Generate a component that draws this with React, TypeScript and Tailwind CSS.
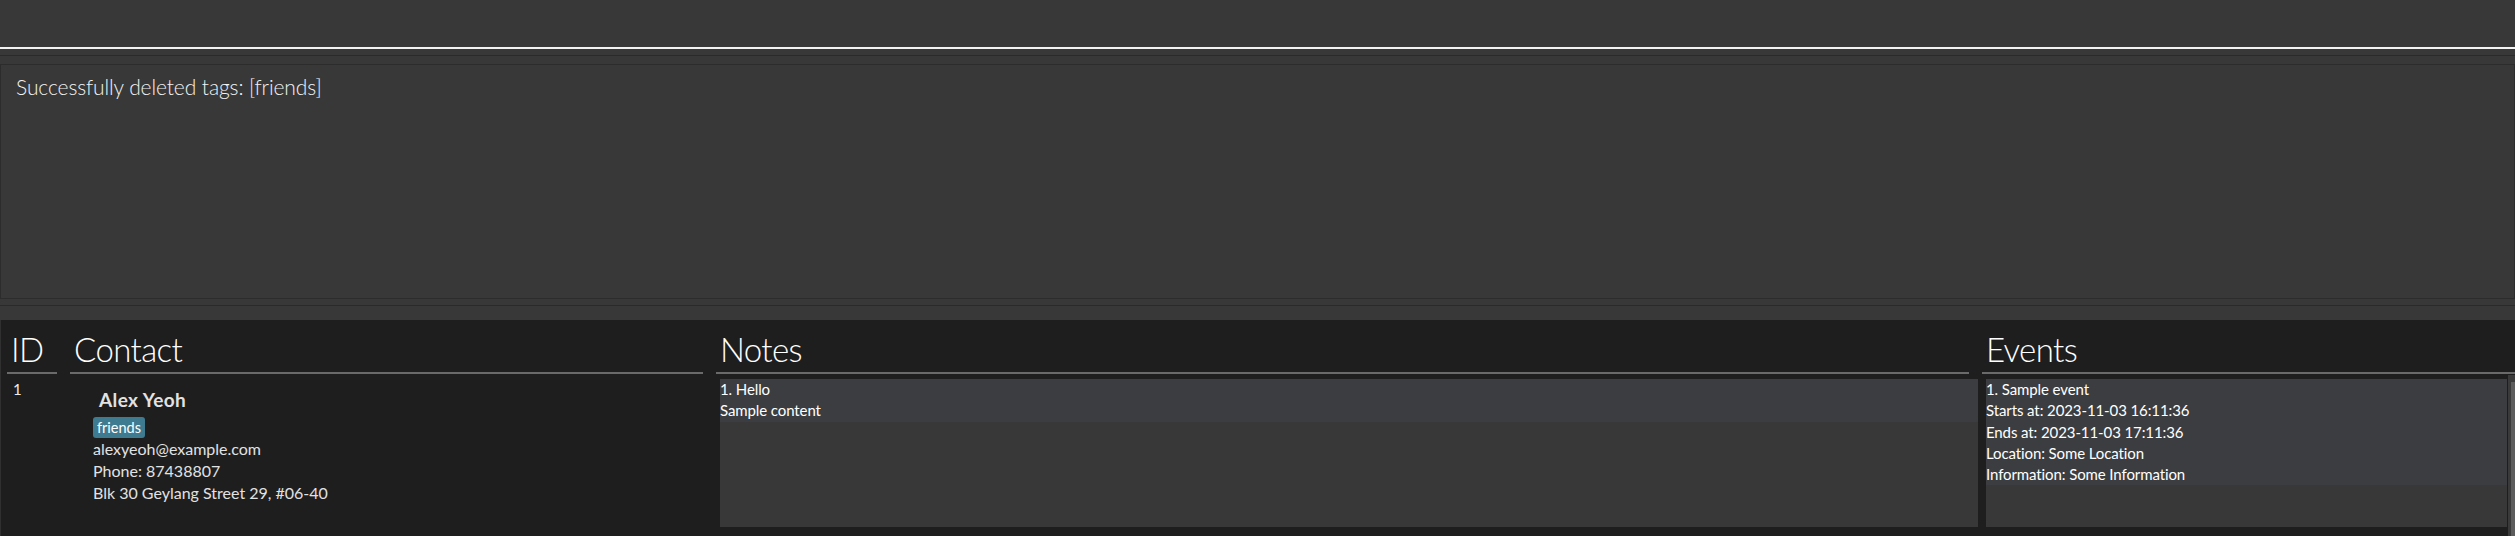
import React from "react";

const font = { fontFamily: "Lato, 'Open Sans', sans-serif" };

interface ColumnHeaderProps {
  title: string;
  lineClass: string;
}

const ColumnHeader: React.FC<ColumnHeaderProps> = ({ title, lineClass }) => (
  <div className="flex flex-col">
    <div className="pt-[12px] pl-[4px] text-[33px] leading-[34px] tracking-[-0.6px] font-light text-white">
      {title}
    </div>
    <div className={`mt-[6px] h-[2px] bg-[#6a6a6a] ${lineClass}`} />
  </div>
);

const events = [
  "1. Sample event",
  "Starts at: 2023-11-03 16:11:36",
  "Ends at: 2023-11-03 17:11:36",
  "Location: Some Location",
  "Information: Some Information",
];

export default function App() {
  return (
    <div
      className="w-[2515px] h-[536px] bg-[#383838] flex flex-col overflow-hidden"
      style={font}>
      {/* command box */}
      <div className="h-[49px] shrink-0 bg-[#383838] border-b-2 border-[#f2f2f2]" />
      <div className="h-[6px] shrink-0" />
      <div className="h-px shrink-0 bg-[#2a2a2a]" />
      <div className="h-[8px] shrink-0" />

      {/* result display */}
      <div className="h-[235px] shrink-0 border border-[#2c2c2c] pl-[15px] pt-[11px]">
        <p className="text-[21px] leading-[22px] tracking-[-0.1px] font-light text-[#f2f2f2]">
          Successfully deleted tags: [friends]
        </p>
      </div>

      <div className="h-[6px] shrink-0" />
      <div className="h-px shrink-0 bg-[#2a2a2a]" />
      <div className="h-[14px] shrink-0" />

      {/* list panel */}
      <div className="h-[216px] shrink-0 bg-[#1e1e1e] border-l border-[#303030] pl-[6px] flex">
        {/* ID */}
        <div className="w-[50px] flex flex-col">
          <ColumnHeader title="ID" lineClass="w-[50px]" />
          <div className="mt-[5px] pl-[6px] text-[15px] leading-[20px] text-[#ececec]">
            1
          </div>
        </div>

        {/* Contact */}
        <div className="ml-[13px] w-[633px] flex flex-col">
          <ColumnHeader title="Contact" lineClass="w-[633px]" />
          <div className="mt-[5px] pl-[23px] flex flex-col items-start text-[#e2e2e2]">
            <div className="mt-[9px] pl-[6px] text-[19px] leading-[24px] tracking-[0.4px] font-bold">
              Alex Yeoh
            </div>
            <span className="mt-[5px] h-[21px] px-[4px] rounded-[3px] bg-[#3e7b91] text-white text-[14.5px] leading-[21px]">
              friends
            </span>
            <div className="text-[16px] leading-[22px]">alexyeoh@example.com</div>
            <div className="text-[16px] leading-[22px]">Phone: 87438807</div>
            <div className="text-[16px] leading-[22px]">
              Blk 30 Geylang Street 29, #06-40
            </div>
          </div>
        </div>

        {/* Notes */}
        <div className="ml-[13px] w-[1262px] flex flex-col">
          <ColumnHeader title="Notes" lineClass="w-[1253px]" />
          <div className="mt-[5px] ml-[4px] h-[148px] bg-[#383838] text-white text-[15px] leading-[21.3px] tracking-[-0.1px]">
            <div className="bg-[#3c3d40]">
              <div>1. Hello</div>
              <div>Sample content</div>
            </div>
          </div>
        </div>

        {/* Events */}
        <div className="ml-[4px] w-[533px] flex flex-col">
          <ColumnHeader title="Events" lineClass="w-[533px]" />
          <div className="mt-px flex-1 flex">
            <div className="mt-[4px] ml-[4px] w-[521px] h-[148px] bg-[#383838] text-white text-[15px] leading-[21.3px] tracking-[-0.1px]">
              <div className="bg-[#3c3d40]">
                {events.map((line) => (
                  <div key={line}>{line}</div>
                ))}
              </div>
            </div>
            <div className="ml-px w-[7px] bg-[#3a3a3a] flex">
              <div className="mt-[7px] ml-[3px] w-[3px] flex-1 bg-[#5c5c5c]" />
            </div>
          </div>
        </div>
      </div>
    </div>
  );
}
